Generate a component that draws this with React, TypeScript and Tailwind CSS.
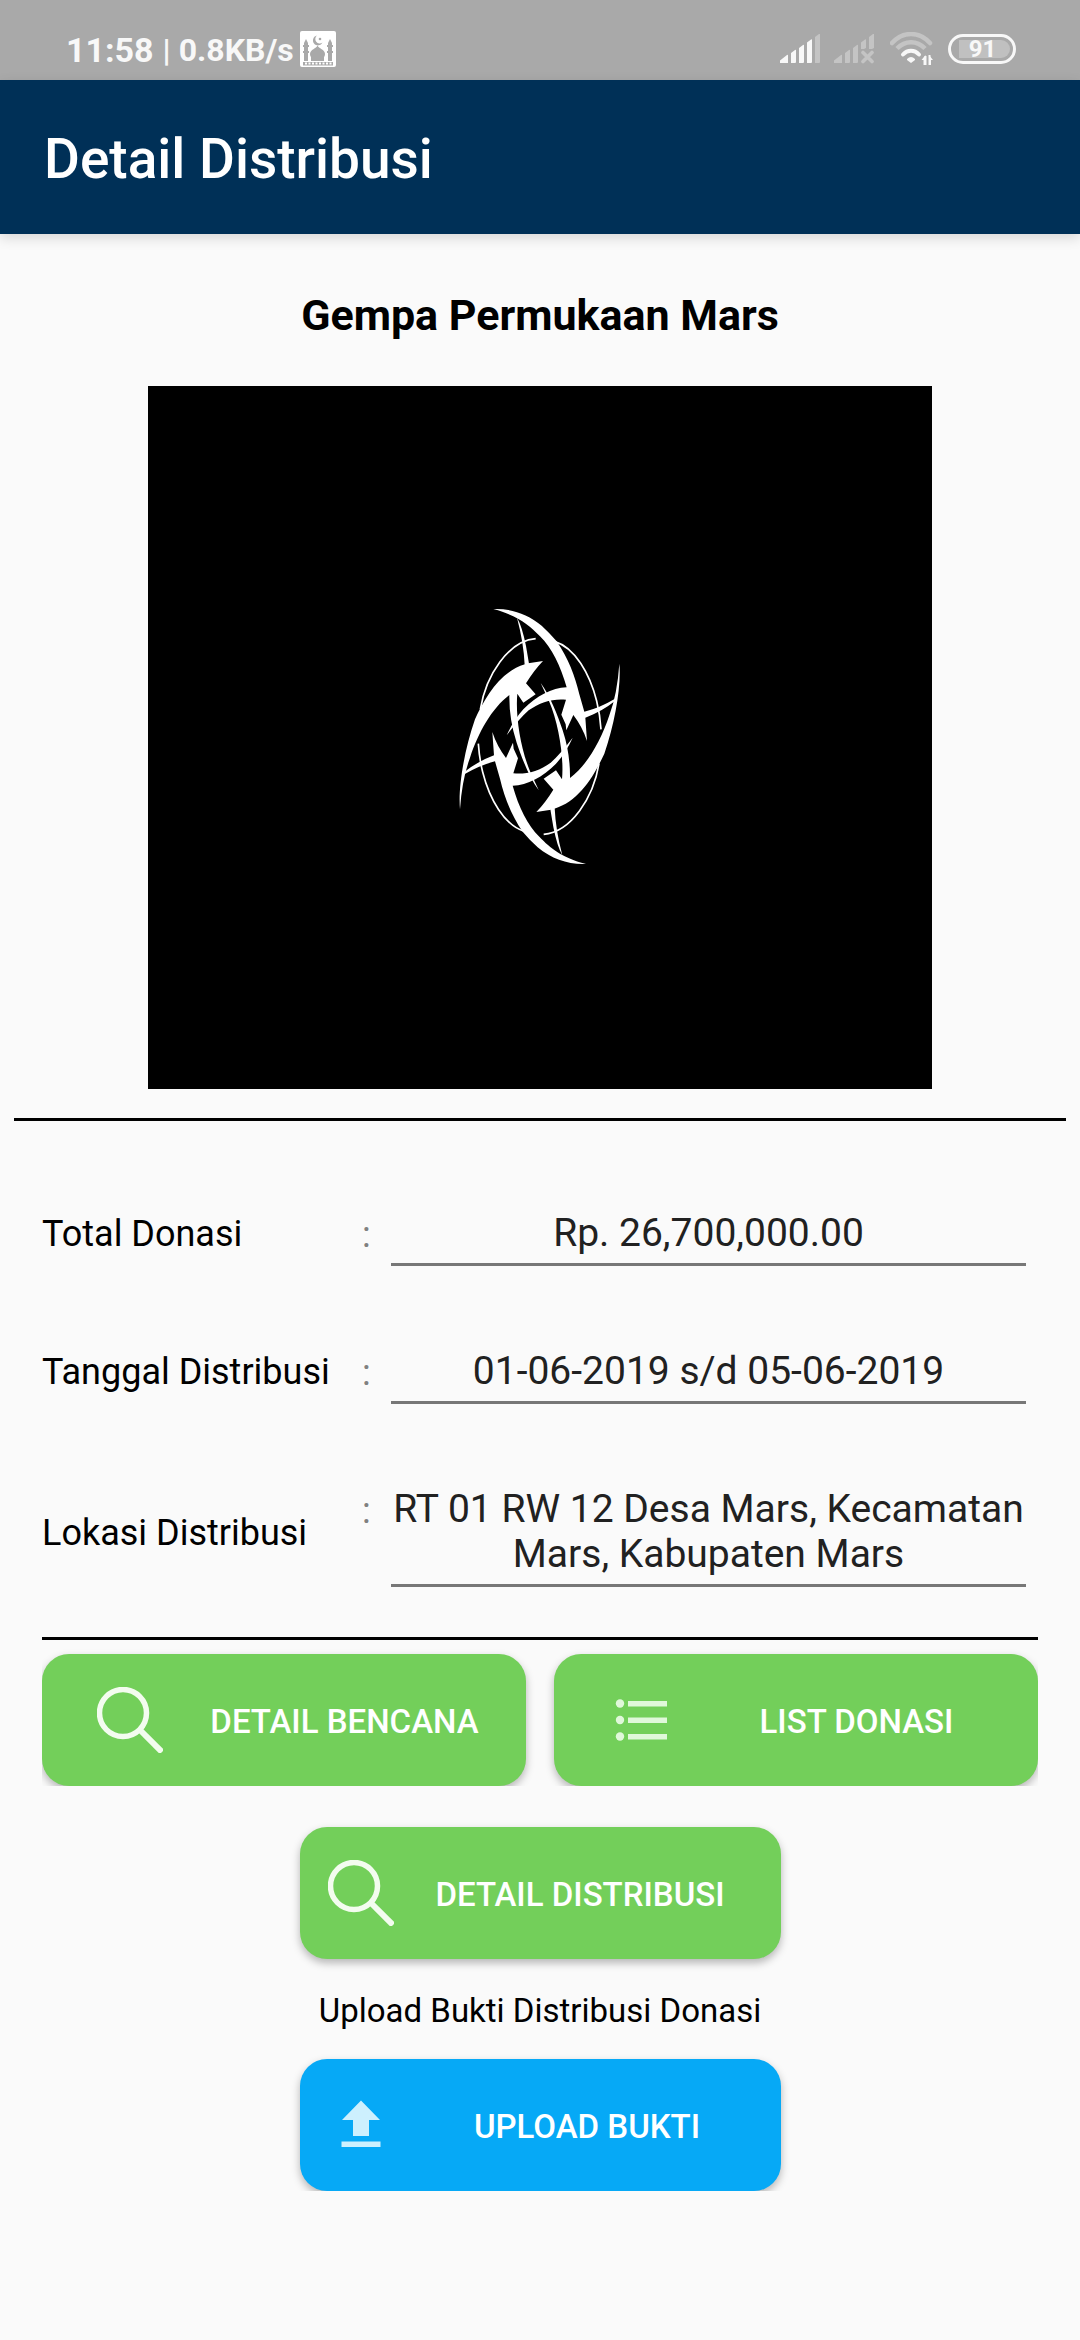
import type { ReactNode } from 'react';

function MosqueIcon() {
  return (
    <svg viewBox="0 0 36 36" className="size-9 shrink-0" aria-hidden="true">
      <rect width="36" height="36" rx="2" fill="#fff" />
      <g fill="#a9a9a9">
        <path d="M17 4.500a5 5 0 1 0 5.500 7A4.300 4.300 0 1 1 17 4.500Z" />
        <circle cx="20" cy="8" r="1.300" />
        <path d="M6 8l2 4v2h1v2H8v4h1v2H8v8H4v-8H3v-2h1v-4H3v-2h1v-2ZM30 8l2 4v2h1v2h-1v4h1v2h-1v8h-4v-8h-1v-2h1v-4h-1v-2h1v-2Z" />
        <path d="M17.500 14.500c1 3 7.500 4 7.500 8.500 0 2-1 3-1 3v4H11v-4s-1-1-1-3c0-4.500 6.500-5.500 7.500-8.500Z" />
        <path d="M3 31h30v3.500H3Z" />
      </g>
      <path d="M5 32.500h27" stroke="#fff" strokeWidth="2" strokeDasharray="2 1.500" />
    </svg>
  );
}

function SignalIcon() {
  return (
    <svg viewBox="0 0 40 30" className="h-[30px] w-10" fill="#f8f8f8" aria-hidden="true">
      <path d="M0 29v-2.500L7 21q1-.5 1 .5V29ZM11 29V19l4-3q1-.5 1 .5V28q0 1-1 1ZM19 29V14l4-3q1-.5 1 .5V28q0 1-1 1ZM27 29V8.500l4-3q1-.5 1 .5v22q0 1-1 1Z" />
      <path d="M35 29V3l4-3q1-.5 1 .5V28q0 1-1 1Z" fill="#c4c4c4" />
    </svg>
  );
}

function NoSignalIcon() {
  return (
    <svg viewBox="0 0 40 30" className="h-[30px] w-10" fill="#c4c4c4" aria-hidden="true">
      <path d="M0 29v-2.500L7 21q1-.5 1 .5V29ZM11 29V19l4-3q1-.5 1 .5V28q0 1-1 1ZM19 29V14l4-3q1-.5 1 .5V28q0 1-1 1ZM27 15V8.500l4-3q1-.5 1 .5v8l-2 1ZM35 15V3l4-3q1-.5 1 .5V14l-2 1Z" />
      <path d="M29 18.500l9 9M38 18.500l-9 9" stroke="#c4c4c4" strokeWidth="3.600" strokeLinecap="round" />
    </svg>
  );
}

function WifiIcon() {
  return (
    <svg viewBox="0 0 44 34" className="h-[34px] w-11" fill="none" strokeWidth="4.500" aria-hidden="true">
      <path d="M2 11C13-1 29-1 40 11" stroke="#c4c4c4" strokeLinecap="round" />
      <path d="M7 16.500C15 8 27 8 35 16.500" stroke="#c4c4c4" />
      <path d="M13 22.500C17.500 17.500 24.500 17.500 29 22.500" stroke="#f8f8f8" strokeWidth="4" strokeLinecap="round" />
      <path d="M17 27q4-4 8 0v1l-4 3-4-3Z" fill="#f8f8f8" />
      <path d="M35.500 23v10h-2v-5h-2ZM39 33V23l4 5h-2v5Z" fill="#f8f8f8" />
      <path d="M35.500 33V24M39.500 33V23" stroke="#f8f8f8" strokeWidth="2" />
    </svg>
  );
}

function Emblem() {
  const half = (
    <>
      <path d="M160 54C215 52 262 69 305 104Q328 125 350 151C385 202 405 255 418 310L433 362Q480 350 525 323L525 330Q485 362 436 380L441 450Q427 407 400 372L379 418L377 400L364 371L378 326C340 322 300 333 266 358Q237 384 200 433Q220 388 250 355C290 315 335 291 380 289C362 225 335 170 300 136C265 100 235 75 160 54Z" />
      <path d="M60 655C54 590 72 480 105 385C135 320 180 242 255 220L265 217L309 210Q282 238 258 277L287 310L250 335L232 308C226 370 240 470 271 543L296 597C268 560 245 500 230 455Q207 385 208 312C155 352 115 425 90 500Q66 565 60 655Z" />
      <path d="M231 80Q246 105 258 165L267 218L254 222Q251 155 231 80Z" />
      <path d="M345 152C405 170 450 250 470 330Q480 370 483 415" fill="none" stroke="#fff" strokeWidth="5" />
      <path d="M287 143C205 150 138 252 121 355" fill="none" stroke="#fff" strokeWidth="5" />
    </>
  );
  return (
    <svg viewBox="0 0 600 870" className="mb-1 h-[290px] w-[200px]" fill="#fff" role="img" aria-label="Foto bencana">
      <g>{half}</g>
      <g transform="rotate(180 299 436.500)">{half}</g>
    </svg>
  );
}

function SearchIcon() {
  return (
    <svg viewBox="0 0 66 66" className="size-[66px] shrink-0" fill="none" stroke="#f3fcef" strokeWidth="5.500" aria-hidden="true">
      <circle cx="26" cy="26" r="23.500" />
      <path d="M43 43l22 22" strokeWidth="6" />
    </svg>
  );
}

function ListIcon() {
  return (
    <svg viewBox="0 0 66 66" className="size-[66px] shrink-0" fill="#e0f8da" aria-hidden="true">
      <circle cx="11" cy="16.500" r="4.200" />
      <circle cx="11" cy="33" r="4.200" />
      <circle cx="11" cy="49.500" r="4.200" />
      <path d="M19 14h39v5.500H19ZM19 30.500h39v5.500H19ZM19 47h39v5.500H19Z" />
    </svg>
  );
}

function UploadIcon() {
  return (
    <svg viewBox="0 0 66 66" className="size-[66px] shrink-0" fill="#cdf0fe" aria-hidden="true">
      <path d="M33 8.500L52 28H41v16H25V28H14ZM13.500 49.500h39V55h-39Z" />
    </svg>
  );
}

function ActionButton({ icon, className, children }: { icon: ReactNode; className: string; children: ReactNode }) {
  return (
    <button
      type="button"
      className={`flex h-[132px] items-center rounded-[27px] text-[33px] leading-[39px] font-medium whitespace-nowrap text-white shadow-[0_4px_8px_rgba(0,0,0,0.28)] ${className}`}
    >
      {icon}
      <span className="flex-1 pt-[2px] text-center">{children}</span>
    </button>
  );
}

const fieldClass =
  'block w-full resize-none overflow-hidden border-b-3 border-[#777] bg-transparent pt-px pb-[7px] text-center text-[39px] leading-[45px] text-[#212121] outline-none';

function Field({ id, label, value, multiline }: { id: string; label: string; value: string; multiline?: boolean }) {
  return (
    <div className="flex">
      <label htmlFor={id} className="w-[320px] shrink-0 self-center pb-2 text-[36px] leading-[42px] text-black">
        {label}
      </label>
      <span className="w-[29px] shrink-0 pt-[3px] text-[36px] leading-[45px] text-[#808080]">:</span>
      {multiline ? (
        <textarea id={id} rows={2} defaultValue={value} className={fieldClass} />
      ) : (
        <input id={id} type="text" defaultValue={value} className={fieldClass} />
      )}
    </div>
  );
}

export default function App() {
  return (
    <div className="min-h-screen bg-[#fafafa] font-[Roboto,sans-serif]">
      <div className="flex h-20 items-center justify-between bg-[#a9a9a9] pt-[18px] pr-16 pl-[66px] font-bold text-[#f8f8f8]">
        <div className="flex items-center">
          <span className="pt-[2px] text-[34px] leading-10">11:58</span>
          <span className="ml-[9px] pt-[2px] text-[32px] leading-10">| 0.8KB/s</span>
          <span className="ml-[6px]">
            <MosqueIcon />
          </span>
        </div>
        <div className="flex items-center">
          <SignalIcon />
          <span className="ml-[14px]">
            <NoSignalIcon />
          </span>
          <span className="ml-4">
            <WifiIcon />
          </span>
          <span className="ml-[14px] flex h-[30px] w-[68px] rounded-full border-3 border-[#f8f8f8] p-[3px]">
            <span className="ml-[5px] flex flex-1 items-center justify-center rounded-r-full rounded-l bg-[#c0c0c0] pr-1 text-[24px] leading-5">
              91
            </span>
          </span>
        </div>
      </div>

      <header className="flex h-[154px] items-center bg-[#003057] px-11 pt-1 shadow-[0_4px_12px_rgba(0,0,0,0.14)]">
        <h1 className="text-[55px] leading-[64px] font-medium text-white">Detail Distribusi</h1>
      </header>

      <main>
        <h2 className="pt-[55px] text-center text-[43px] leading-[52px] font-bold text-black">Gempa Permukaan Mars</h2>
        <div className="mx-[148px] mt-[45px] flex h-[703px] items-center justify-center bg-black">
          <Emblem />
        </div>
        <hr className="mx-[14px] mt-[29px] border-t-3 border-black" />

        <form className="flex flex-col gap-[82px] pt-[89px] pr-[54px] pl-[42px]">
          <Field id="total" label="Total Donasi" value="Rp. 26,700,000.00" />
          <Field id="tanggal" label="Tanggal Distribusi" value="01-06-2019 s/d 05-06-2019" />
          <Field id="lokasi" label="Lokasi Distribusi" value="RT 01 RW 12 Desa Mars, Kecamatan Mars, Kabupaten Mars" multiline />
        </form>

        <hr className="mx-[42px] mt-[50px] border-t-3 border-black" />
        <div className="mx-[42px] flex gap-7 overflow-hidden pt-[14px]">
          <ActionButton icon={<SearchIcon />} className="flex-1 bg-[#73cf5a] pl-[55px]">
            DETAIL BENCANA
          </ActionButton>
          <ActionButton icon={<ListIcon />} className="flex-1 bg-[#73cf5a] pl-[55px]">
            LIST DONASI
          </ActionButton>
        </div>

        <div className="flex flex-col items-center overflow-hidden pt-[41px]">
          <ActionButton icon={<SearchIcon />} className="w-[481px] bg-[#73cf5a] pr-[14px] pl-7">
            DETAIL DISTRIBUSI
          </ActionButton>
          <p className="mt-8 mb-[29px] text-[33px] leading-[39px] text-black">Upload Bukti Distribusi Donasi</p>
          <ActionButton icon={<UploadIcon />} className="w-[481px] bg-[#06a9f6] pl-7">
            UPLOAD BUKTI
          </ActionButton>
        </div>
      </main>
    </div>
  );
}
